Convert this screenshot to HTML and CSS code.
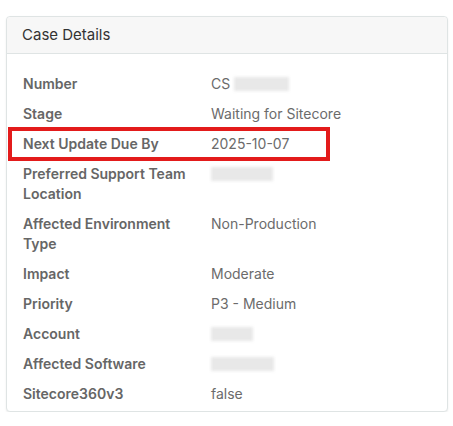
FILE: index.html
```html
<!DOCTYPE html>
<html lang="en">
<head>
    <meta charset="UTF-8">
    <title>Case Details</title>
    <link rel="stylesheet" href="styles.css">
</head>
<body>
    <div class="card">
        <div class="card-header">Case Details</div>
        <div class="card-body">
            <dl class="details">
                <dt>Number</dt>
                <dd>CS<span class="masked gap" style="width: 55px"></span></dd>
                <dt>Stage</dt>
                <dd>Waiting for Sitecore</dd>
                <dt class="highlight-anchor">Next Update Due By<span class="highlight"></span></dt>
                <dd>2025-10-07</dd>
                <dt>Preferred Support Team Location</dt>
                <dd><span class="masked" style="width: 62px"></span></dd>
                <dt>Affected Environment Type</dt>
                <dd>Non-Production</dd>
                <dt>Impact</dt>
                <dd>Moderate</dd>
                <dt>Priority</dt>
                <dd>P3 - Medium</dd>
                <dt>Account</dt>
                <dd><span class="masked" style="width: 42px"></span></dd>
                <dt>Affected Software</dt>
                <dd><span class="masked" style="width: 63px"></span></dd>
                <dt>Sitecore360v3</dt>
                <dd>false</dd>
            </dl>
        </div>
    </div>
</body>
</html>
```

FILE: styles.css
```css
body {
    margin: 0;
    padding: 16px 5px 0 6px;
    font-family: 'Inter', 'Noto Sans', sans-serif;
    background: #fff;
    color: #6b6b6b;
}

.card {
    border: 1px solid #dfe4e4;
    border-radius: 4px;
    background: #fff;
    box-shadow: 0 1px 2px rgba(0, 0, 0, 0.08);
}

.card-header {
    background: #f7f7f7;
    border-bottom: 1px solid #dfe4e4;
    border-radius: 4px 4px 0 0;
    padding: 8px 15px;
    height: 20px;
    line-height: 20px;
    font-size: 15px;
    color: #333;
}

.card-body {
    padding: 20px 16px 7px 16px;
}

.details {
    display: grid;
    grid-template-columns: 188px 1fr;
    row-gap: 10px;
    margin: 0;
    font-size: 14px;
    line-height: 20px;
}

.details dt {
    font-weight: 600;
    color: #666;
    padding-right: 8px;
}

.details dd {
    margin: 0;
    color: #6b6b6b;
}

.masked {
    display: inline-block;
    height: 14px;
    vertical-align: -2px;
    background: #e8e8e8;
    filter: blur(1.5px);
}

.masked.gap {
    margin-left: 4px;
}

/* red callout drawn over the due-date row */
.highlight-anchor {
    position: relative;
}

.highlight {
    position: absolute;
    left: -15px;
    top: -7px;
    width: 314px;
    height: 26px;
    border: 4px solid #e31b1b;
}
```
